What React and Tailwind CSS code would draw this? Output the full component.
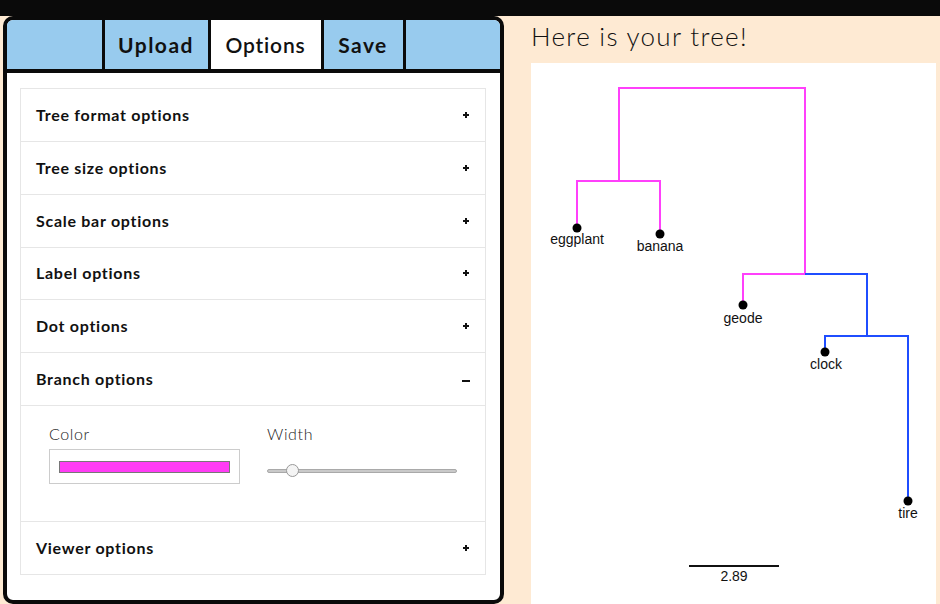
import { useState } from 'react'

const SECTIONS = [
  'Tree format options',
  'Tree size options',
  'Scale bar options',
  'Label options',
  'Dot options',
  'Branch options',
  'Viewer options',
]

const PINK = '#ff40fb'
const BLUE = '#1f4dff'

function PlusIcon() {
  return (
    <svg width="8" height="8" viewBox="0 0 8 8" className="block">
      <rect x="3" y="1" width="2" height="6" fill="#111" />
      <rect x="1" y="3" width="6" height="2" fill="#111" />
    </svg>
  )
}

function MinusIcon() {
  return (
    <svg width="8" height="8" viewBox="0 0 8 8" className="block">
      <rect x="0" y="5" width="8" height="2" fill="#111" />
    </svg>
  )
}

function BranchBody() {
  return (
    <div className="border-t border-[#e6e6e6] pt-[18px] pb-[37px] pl-[28px] flex gap-[27px]">
      <div className="w-[191px]">
        <div className="h-[20px] leading-[20px] text-[16px] font-light tracking-[0.04em] text-[#222]">Color</div>
        <div className="mt-[5px] h-[35px] border border-[#cccccc] flex items-center justify-center">
          <div className="w-[171px] h-[12px] border border-[#777] bg-[#ff3cf5]" />
        </div>
      </div>
      <div className="w-[190px]">
        <div className="h-[20px] leading-[20px] text-[16px] font-light tracking-[0.04em] text-[#222]">Width</div>
        <div className="mt-[15px] h-[24px] flex items-center relative">
          <div className="w-full h-[4px] rounded-full bg-[#c9c9c9] border border-[#a9a9a9]" />
          <div className="absolute left-[19px] top-[5px] w-[13px] h-[13px] rounded-full bg-[#f4f4f4] border border-[#999]" />
        </div>
      </div>
    </div>
  )
}

function Tree() {
  const label = { fontFamily: '"Liberation Sans", Arial, sans-serif', fontSize: 14 }
  return (
    <svg width="405" height="541" viewBox="0 0 405 541" className="block">
      <g fill="none" strokeWidth="2">
        <path d="M88 118 V25 H274 V211" stroke={PINK} />
        <path d="M46 165 V118 H129 V171" stroke={PINK} />
        <path d="M212 242 V211 H274" stroke={PINK} />
        <path d="M274 211 H336 V273" stroke={BLUE} />
        <path d="M294 289 V273 H377 V438" stroke={BLUE} />
        <path d="M158 503 H248" stroke="#111" />
      </g>
      <g fill="#000">
        <circle cx="46" cy="165" r="4.5" />
        <circle cx="129" cy="171" r="4.5" />
        <circle cx="212" cy="242" r="4.5" />
        <circle cx="294" cy="289" r="4.5" />
        <circle cx="377" cy="438" r="4.5" />
      </g>
      <g fill="#111" textAnchor="middle" style={label}>
        <text x="46" y="181">eggplant</text>
        <text x="129" y="188">banana</text>
        <text x="212" y="260">geode</text>
        <text x="295" y="306">clock</text>
        <text x="377" y="455">tire</text>
        <text x="203" y="518">2.89</text>
      </g>
    </svg>
  )
}

export default function App() {
  const [open, setOpen] = useState('Branch options')
  const font = { fontFamily: 'Lato, "Open Sans", sans-serif' }

  return (
    <div className="h-[604px] w-[940px] overflow-hidden bg-[#feead3] flex flex-col" style={font}>
      <div className="h-[16px] bg-[#0a0a0a] shrink-0" />
      <div className="flex flex-1 min-h-0">
        <div className="ml-[3px] w-[501px] h-[588px] border-4 border-[#0a0a0a] rounded-[10px] bg-white flex flex-col overflow-hidden shrink-0">
          <div className="h-[53px] shrink-0 bg-[#98cbee] border-b-4 border-[#0a0a0a] flex justify-center text-[21px] font-bold text-[#111]">
            <div className="w-[106px] border-l-[3px] border-[#0a0a0a] flex items-center justify-center tracking-[0.07em]">Upload</div>
            <div className="w-[113px] border-l-[3px] border-[#0a0a0a] bg-white flex items-center justify-center font-semibold tracking-[0.04em]">Options</div>
            <div className="w-[85px] border-x-[3px] border-[#0a0a0a] flex items-center justify-center tracking-[0.07em]">Save</div>
          </div>
          <div className="pt-[15px] pl-[13px] pr-[14px]">
            <div className="border border-[#e6e6e6]">
              {SECTIONS.map((s, i) => (
                <div key={s} className={i > 0 ? 'border-t border-[#e6e6e6]' : ''}>
                  <button
                    onClick={() => setOpen(open === s ? null : s)}
                    className="w-full h-[51.85px] pl-[15px] pr-[15px] flex items-center justify-between text-[16px] font-bold tracking-[0.045em] text-[#111]"
                  >
                    <span>{s}</span>
                    {open === s ? <MinusIcon /> : <PlusIcon />}
                  </button>
                  {open === s && s === 'Branch options' && <BranchBody />}
                </div>
              ))}
            </div>
          </div>
        </div>
        <div className="pl-[27px] flex flex-col">
          <div className="h-[47px] pt-[3px] leading-[34px] text-[26px] font-light tracking-[0.05em] text-[#111]">Here is your tree!</div>
          <div className="w-[405px] flex-1 bg-white">
            <Tree />
          </div>
        </div>
      </div>
    </div>
  )
}
